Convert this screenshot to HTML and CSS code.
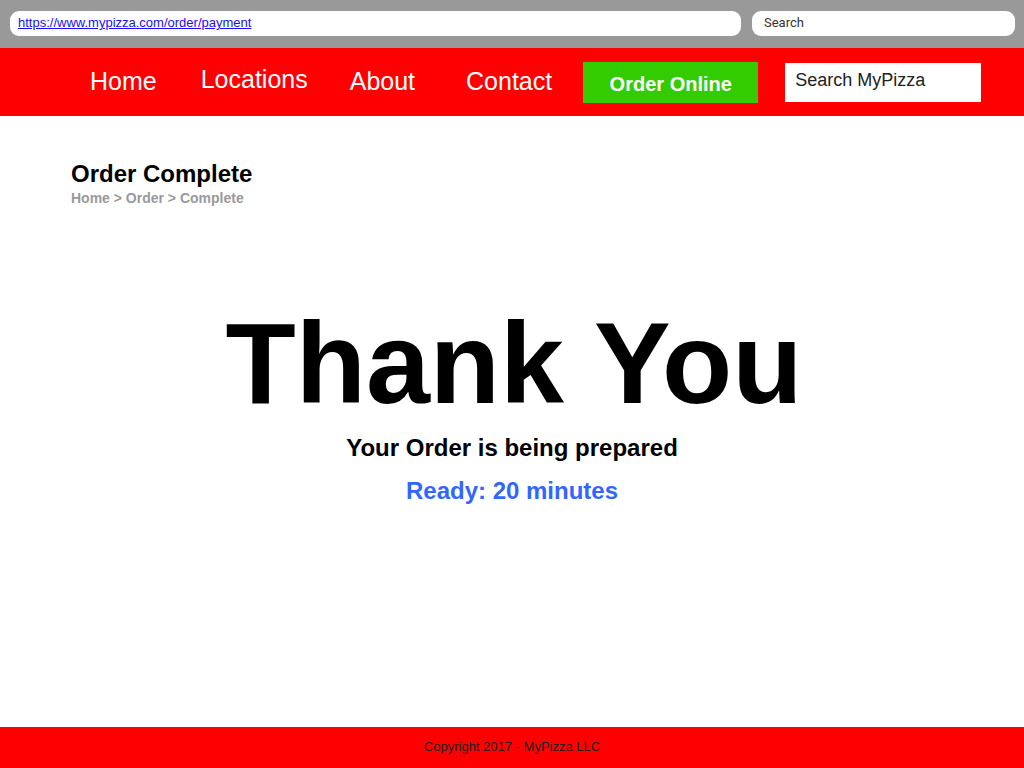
FILE: index.html
```html
<!DOCTYPE html>
<html lang="en">
<head>
<meta charset="utf-8">
<title>Order Complete - MyPizza</title>
<link rel="stylesheet" href="styles.css">
</head>
<body>
<div class="page">
  <div class="browser-bar">
    <div class="url-field"><a class="url" href="#">https://www.mypizza.com/order/payment</a></div>
    <div class="browser-search">Search</div>
  </div>
  <nav class="nav">
    <a class="nav-link nav-home" href="#">Home</a>
    <a class="nav-link nav-locations" href="#">Locations</a>
    <a class="nav-link nav-about" href="#">About</a>
    <a class="nav-link nav-contact" href="#">Contact</a>
    <a class="order-btn" href="#">Order Online</a>
    <div class="site-search">Search MyPizza</div>
  </nav>
  <main class="main">
    <h1 class="page-title">Order Complete</h1>
    <div class="breadcrumb">Home &gt; Order &gt; Complete</div>
    <div class="thanks">Thank You</div>
    <div class="status">Your Order is being prepared</div>
    <div class="ready">Ready: 20 minutes</div>
  </main>
  <footer class="footer">Copyright 2017 - MyPizza LLC</footer>
</div>
</body>
</html>
```

FILE: styles.css
```css
html, body {
  margin: 0;
  padding: 0;
  background: #ffffff;
  font-family: "Liberation Sans", Arial, sans-serif;
}

.page {
  min-height: 100vh;
  display: flex;
  flex-direction: column;
}

.browser-bar {
  height: 48px;
  box-sizing: border-box;
  background: #999999;
  display: flex;
  align-items: flex-start;
  padding: 11px 9px 0 10px;
  gap: 11px;
}

.url-field {
  width: 731px;
  height: 25px;
  box-sizing: border-box;
  background: #ffffff;
  border-radius: 9px;
  padding: 0 8px;
  font-size: 13px;
  line-height: 23px;
}

.url {
  color: #1a0dff;
  text-decoration: underline;
}

.browser-search {
  flex: 1;
  height: 25px;
  box-sizing: border-box;
  background: #ffffff;
  border-radius: 9px;
  padding: 0 12px;
  font-family: Roboto, "Liberation Sans", sans-serif;
  font-size: 13px;
  line-height: 23px;
  color: #333333;
}

.nav {
  height: 68px;
  background: #ff0000;
  display: flex;
  align-items: center;
  padding-left: 90px;
}

.nav-link {
  color: #ffffff;
  text-decoration: none;
  font-size: 25px;
  line-height: 29px;
  padding-bottom: 2px;
}

.nav-locations { margin-left: 44px; margin-top: -3px; }
.nav-about { margin-left: 42px; }
.nav-contact { margin-left: 51px; }

.order-btn {
  margin-left: 31px;
  width: 175px;
  height: 41px;
  margin-top: 1px;
  background: #33cc00;
  color: #ffffff;
  text-decoration: none;
  font-weight: bold;
  font-size: 20px;
  display: flex;
  align-items: center;
  justify-content: center;
  padding-top: 3px;
  box-sizing: border-box;
}

.site-search {
  margin-left: 27px;
  width: 196px;
  height: 39px;
  margin-top: 1px;
  box-sizing: border-box;
  background: #ffffff;
  color: #222222;
  font-size: 18px;
  line-height: 21px;
  padding: 7px 10px 0;
}

.main {
  flex: 1;
  display: flex;
  flex-direction: column;
}

.page-title {
  margin: 44px 0 0 71px;
  font-size: 24px;
  line-height: 28px;
  font-weight: bold;
  color: #000000;
}

.breadcrumb {
  margin: 2px 0 0 71px;
  font-size: 14px;
  line-height: 16px;
  font-weight: bold;
  color: #999999;
}

.thanks {
  margin-top: 100px;
  text-align: center;
  font-size: 115px;
  line-height: 115px;
  font-weight: bold;
  color: #000000;
  padding-left: 4px;
}

.status {
  margin-top: 13px;
  text-align: center;
  font-size: 24px;
  line-height: 28px;
  font-weight: bold;
  color: #000000;
}

.ready {
  margin-top: 15px;
  text-align: center;
  font-size: 24px;
  line-height: 28px;
  font-weight: bold;
  color: #3366ff;
}

.footer {
  height: 41px;
  box-sizing: border-box;
  background: #ff0000;
  text-align: center;
  font-size: 13px;
  line-height: 39px;
  color: #222222;
}
```
